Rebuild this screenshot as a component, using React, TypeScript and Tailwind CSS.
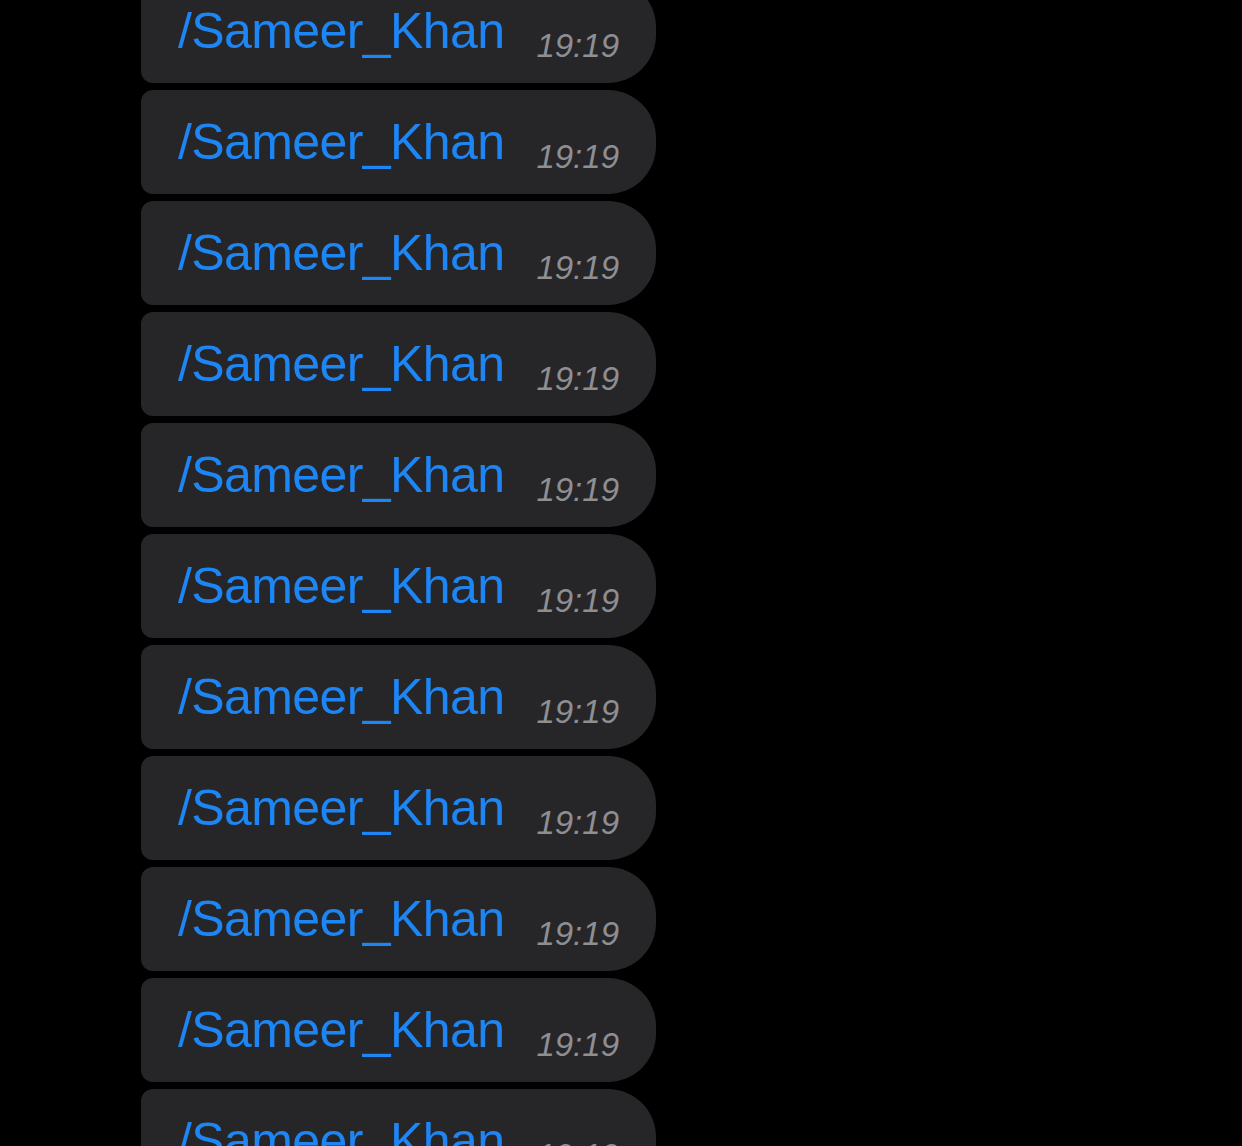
const messages = Array.from({ length: 11 }, (_, i) => ({ id: i, text: '/Sameer_Khan', time: '19:19' }));

export default function App() {
  return (
    <div className="h-[1146px] w-full overflow-hidden bg-black" style={{ fontFamily: '"Liberation Sans", Arial, sans-serif' }}>
      <div className="mt-[-21px] flex flex-col gap-[7px] pl-[141px]">
        {messages.map((m) => (
          <div
            key={m.id}
            className="flex h-[104px] w-[515px] shrink-0 items-start rounded-l-[12px] rounded-r-[48px] bg-[#262628] pl-[37px] pr-[37px] pt-[27px]"
          >
            <span className="text-[50px] leading-[50px] tracking-[-0.6px] text-[#1d86f4]">{m.text}</span>
            <span className="ml-auto mt-[23px] text-[33px] italic leading-[33px] text-[#8e8e93]">{m.time}</span>
          </div>
        ))}
      </div>
    </div>
  );
}
